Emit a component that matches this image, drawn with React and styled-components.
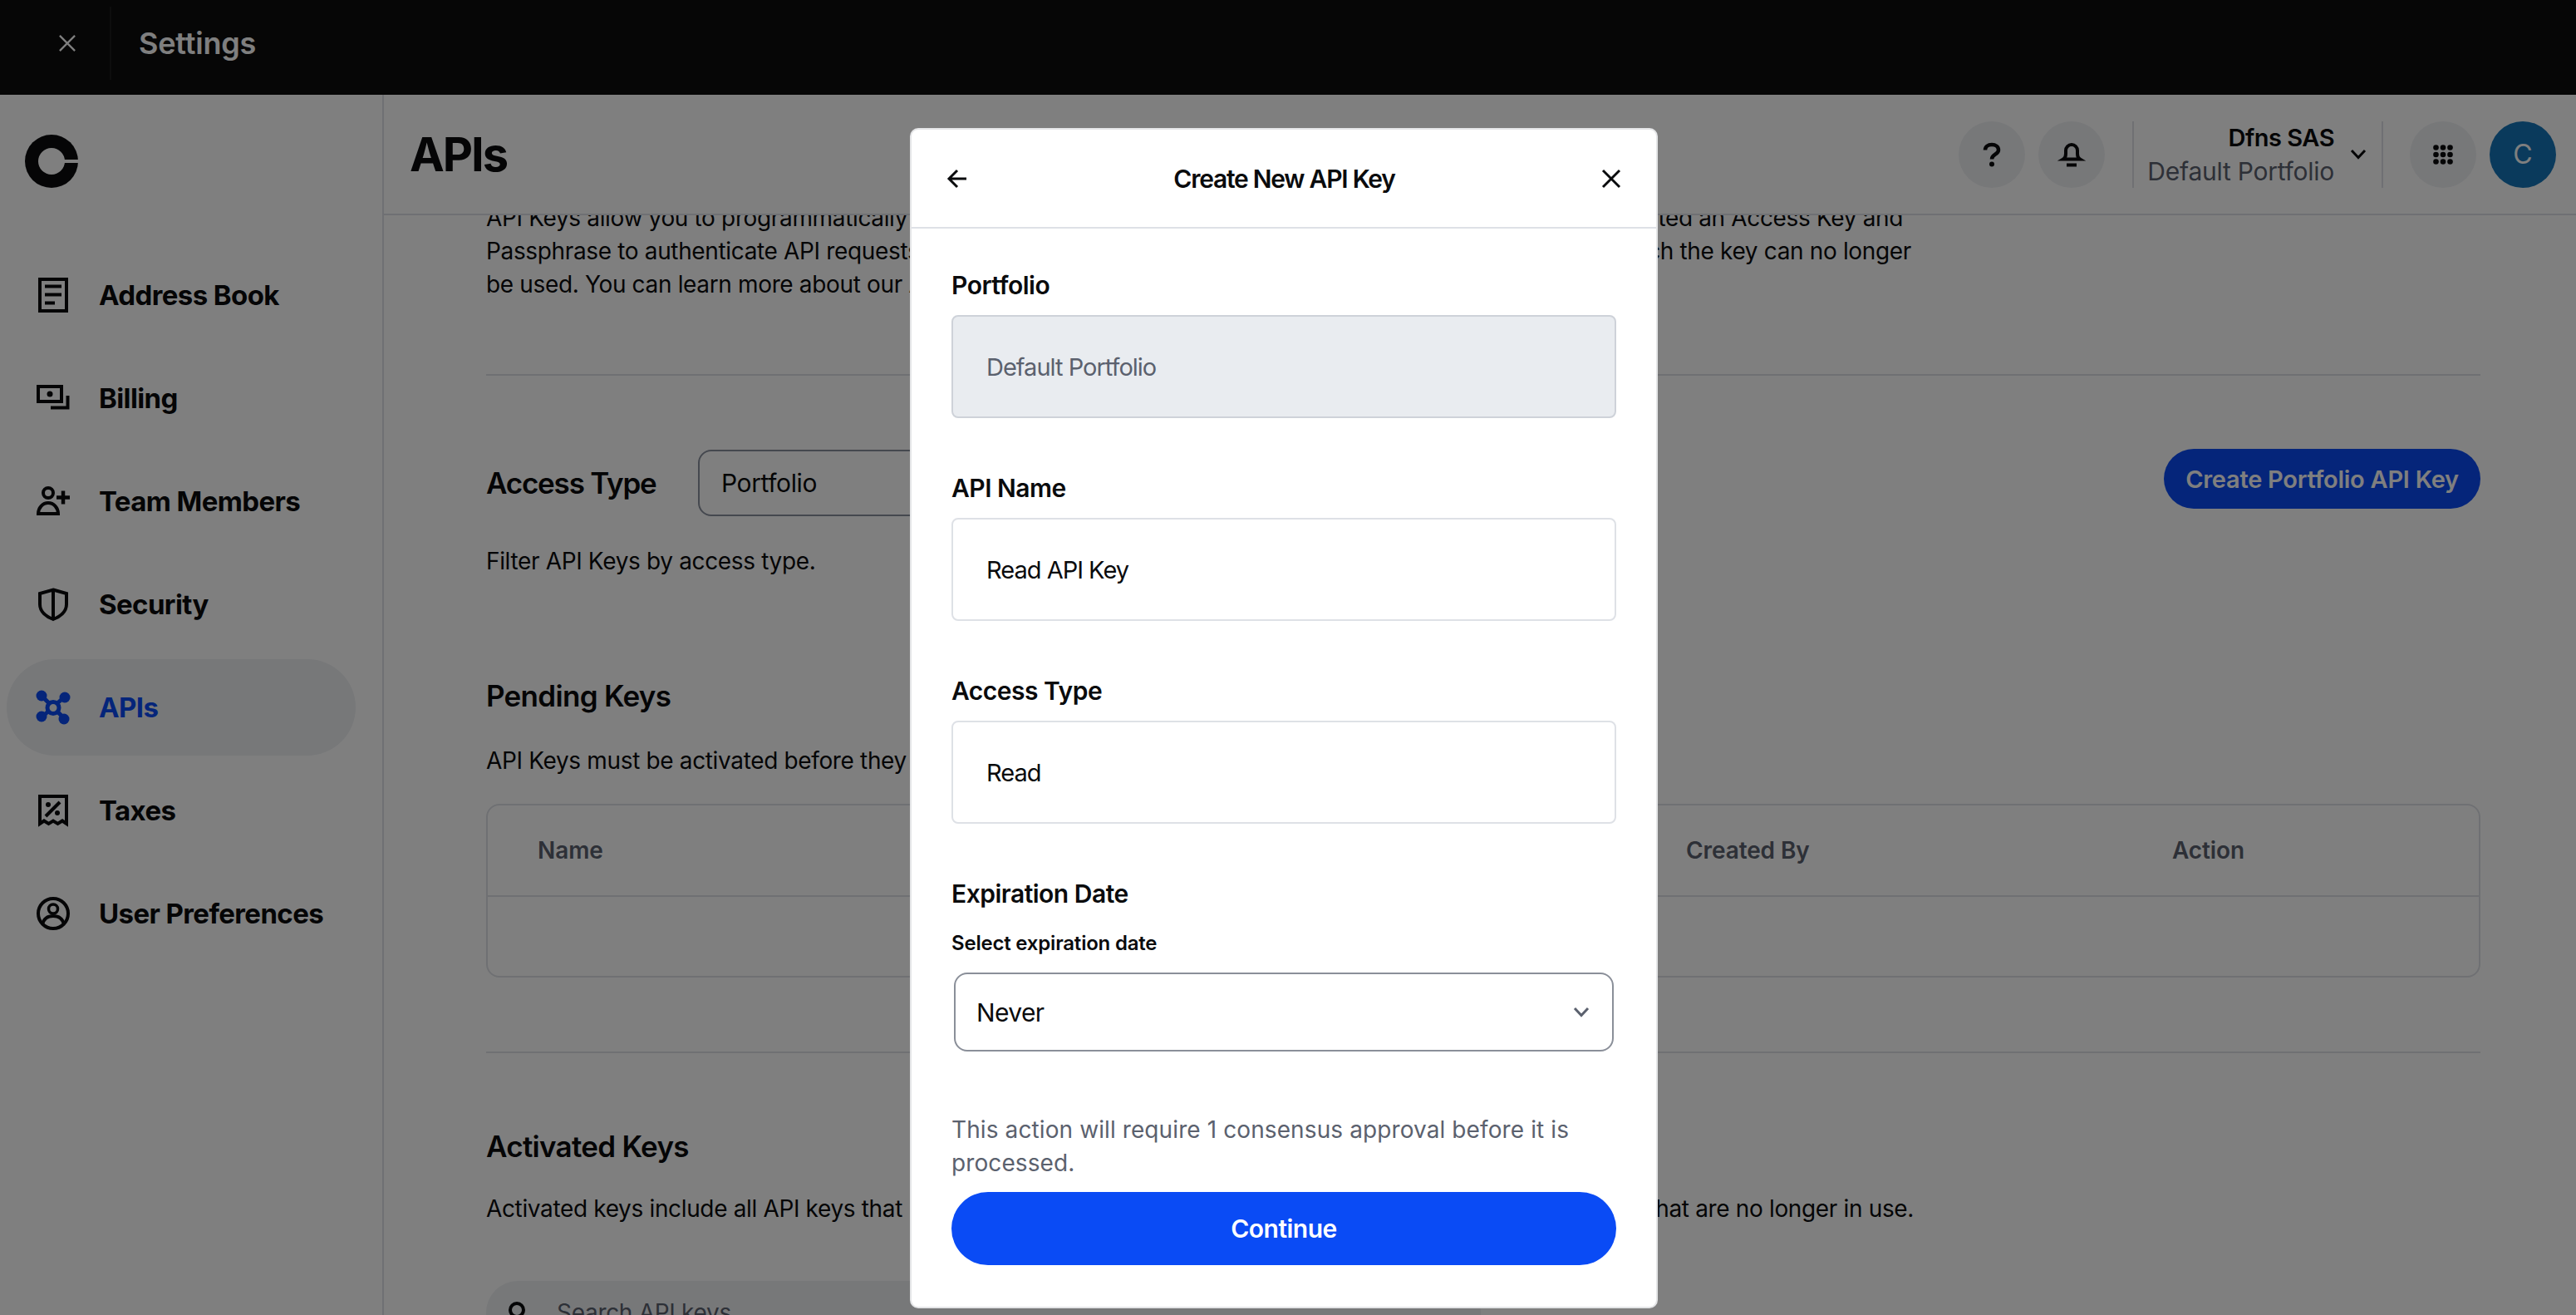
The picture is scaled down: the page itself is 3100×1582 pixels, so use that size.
import React from 'react'
import styled, { createGlobalStyle } from 'styled-components'

const Global = createGlobalStyle`
  html, body {
    margin: 0;
    padding: 0;
    background: #fff;
    color: #0a0b0d;
    font-family: Inter, "Liberation Sans", sans-serif;
  }
  * { box-sizing: border-box; }
`

const Page = styled.div`
  position: relative;
  display: flex;
  flex-direction: column;
  width: 3100px;
  height: 1582px;
  overflow: hidden;
`

const TopBar = styled.header`
  display: flex;
  align-items: center;
  flex: none;
  height: 114px;
  padding-bottom: 10px;
  background: #0d0d0d;
`

const TopClose = styled.div`
  display: flex;
  align-items: center;
  justify-content: center;
  width: 134px;
  height: 88px;
  padding-left: 30px;
  border-right: 2px solid #1b1b1b;
  color: #fff;
`

const TopTitle = styled.div`
  margin-left: 33px;
  font-size: 36px;
  font-weight: 600;
  letter-spacing: -0.2px;
  color: #fff;
`

const Body = styled.div`
  display: flex;
  flex: 1;
  min-height: 0;
`

const Sidebar = styled.aside`
  flex: none;
  width: 462px;
  padding-top: 48px;
  border-right: 2px solid #dee1e6;
`

const Logo = styled.svg`
  display: block;
  width: 64px;
  height: 64px;
  margin: 0 0 71px 30px;
`

const Nav = styled.nav`
  display: flex;
  flex-direction: column;
  gap: 8px;
  width: 420px;
  margin-left: 8px;
`

const NavRow = styled.a`
  display: flex;
  align-items: center;
  gap: 35px;
  height: 116px;
  padding-left: 36px;
  border-radius: 58px;
  font-size: 33px;
  font-weight: 650;
  letter-spacing: -0.6px;
  color: ${p => (p.$active ? '#0a4bf5' : '#0a0b0d')};
  background: ${p => (p.$active ? '#eef0f3' : 'transparent')};
`

const NavIcon = styled.svg`
  flex: none;
  width: 40px;
  height: 40px;
  overflow: visible;
`

const Main = styled.main`
  display: flex;
  flex-direction: column;
  flex: 1;
  min-width: 0;
`

const MainHeader = styled.div`
  display: flex;
  align-items: center;
  justify-content: space-between;
  flex: none;
  height: 145px;
  padding: 0 24px 0 31px;
  border-bottom: 2px solid #dee1e6;
`

const PageTitle = styled.h1`
  margin: 0;
  font-size: 56px;
  font-weight: 700;
  letter-spacing: -2px;
`

const HeaderTools = styled.div`
  display: flex;
  align-items: center;
  height: 80px;
`

const RoundButton = styled.div`
  display: flex;
  align-items: center;
  justify-content: center;
  width: 80px;
  height: 80px;
  margin-left: ${p => p.$gap || 16}px;
  border-radius: 50%;
  background: #eef0f3;
`

const Avatar = styled(RoundButton)`
  background: #1575b8;
  color: #fff;
  font-size: 32px;
`

const VRule = styled.div`
  width: 2px;
  height: 80px;
  margin-left: ${p => p.$gap || 0}px;
  background: #dee1e6;
`

const Account = styled.div`
  display: flex;
  align-items: center;
  gap: 20px;
  padding: 0 19px 0 16px;
`

const AccountText = styled.div`
  text-align: right;
  line-height: 40px;
`

const AccountName = styled.div`
  font-size: 29px;
  font-weight: 600;
  letter-spacing: -0.5px;
`

const AccountSub = styled.div`
  font-size: 30px;
  letter-spacing: -0.25px;
  color: #5b616e;
`

const Content = styled.div`
  flex: 1;
  min-height: 0;
  padding: 0 115px 0 123px;
  overflow: hidden;
`

const Intro = styled.div`
  margin-top: -17px;
`

const SplitLine = styled.div`
  display: flex;
  justify-content: space-between;
  width: ${p => p.$width || 1715}px;
  margin-top: ${p => p.$top || 0}px;
  font-size: 28px;
  line-height: 40px;
  letter-spacing: -0.35px;
  white-space: nowrap;
`

const Rule = styled.hr`
  height: 2px;
  margin: ${p => p.$top}px 0 0;
  border: 0;
  background: #dee1e6;
`

const AccessRow = styled.div`
  display: flex;
  align-items: flex-start;
  justify-content: space-between;
  margin-top: 88px;
`

const AccessLeft = styled.div`
  display: flex;
  align-items: center;
  margin-top: 1px;
`

const SectionTitle = styled.h2`
  margin: ${p => p.$top || 0}px 0 0;
  font-size: 35px;
  font-weight: 600;
  line-height: 48px;
  letter-spacing: -0.7px;
`

const AccessTitle = styled(SectionTitle)`
  width: 255px;
  letter-spacing: -1.2px;
`

const AccessSelect = styled.div`
  display: flex;
  align-items: center;
  width: 420px;
  height: 80px;
  padding-left: 26px;
  border: 2px solid #8a919e;
  border-radius: 16px;
  font-size: 30px;
  letter-spacing: -0.4px;
`

const PrimarySmall = styled.div`
  display: flex;
  align-items: center;
  justify-content: center;
  width: 381px;
  height: 72px;
  border-radius: 36px;
  background: #0a4bf5;
  color: #fff;
  font-size: 29px;
  font-weight: 600;
  letter-spacing: -0.25px;
`

const KeysTable = styled.div`
  height: 209px;
  margin-top: 32px;
  border: 2px solid #dee1e6;
  border-radius: 16px;
`

const TableHead = styled.div`
  display: grid;
  grid-template-columns: 1382px 585px 1fr;
  align-items: center;
  height: 110px;
  padding-left: 60px;
  border-bottom: 2px solid #dee1e6;
  font-size: 28px;
  font-weight: 600;
  letter-spacing: -0.1px;
  color: #5b616e;
`

const SearchBar = styled.div`
  display: flex;
  align-items: center;
  gap: 34px;
  width: 1197px;
  height: 76px;
  margin-top: 67px;
  padding-left: 27px;
  border-radius: 38px;
  background: #eef0f3;
  font-size: 28px;
  letter-spacing: -0.3px;
  color: #5b616e;
`

const SearchIcon = styled.svg`
  flex: none;
  width: 24px;
  height: 36px;
  overflow: visible;
`

const Scrim = styled.div`
  position: absolute;
  inset: 0;
  display: flex;
  align-items: flex-start;
  justify-content: center;
  padding: 154px 10px 0 0;
  background: rgba(0, 0, 0, 0.5);
`

const Modal = styled.div`
  width: 900px;
  height: 1420px;
  border: 2px solid #e4e5e7;
  border-radius: 10px;
  background: #fff;
`

const ModalHeader = styled.div`
  display: flex;
  align-items: center;
  justify-content: space-between;
  height: 119px;
  padding: 0 43px 0 42px;
  border-bottom: 2px solid #dee1e6;
`

const ModalTitle = styled.div`
  font-size: 30px;
  font-weight: 600;
  letter-spacing: -1.25px;
`

const ModalBody = styled.div`
  display: flex;
  flex-direction: column;
  padding: 48px 48px 0;
`

const Field = styled.div`
  display: flex;
  flex-direction: column;
  margin-bottom: 64px;
`

const FieldLabel = styled.div`
  margin-bottom: 16px;
  font-size: 30px;
  font-weight: 600;
  line-height: 40px;
  letter-spacing: -0.5px;
`

const ValueBox = styled.div`
  display: flex;
  align-items: center;
  height: 124px;
  padding-left: 40px;
  border: 2px solid ${p => (p.$disabled ? '#ced2d9' : '#dee1e6')};
  border-radius: 8px;
  background: ${p => (p.$disabled ? '#e9ecf0' : '#fff')};
  color: ${p => (p.$disabled ? '#5b616e' : '#0a0b0d')};
  font-size: 29px;
  letter-spacing: -1px;
`

const SubLabel = styled.div`
  margin-top: 8px;
  margin-bottom: 19px;
  font-size: 24px;
  font-weight: 600;
  line-height: 32px;
  letter-spacing: -0.2px;
`

const SelectBox = styled.div`
  display: flex;
  align-items: center;
  justify-content: space-between;
  height: 95px;
  margin: 0 3px;
  padding: 0 28px 0 25px;
  border: 2px solid #8a8f99;
  border-radius: 16px;
  font-size: 30px;
  letter-spacing: -0.6px;
`

const Notice = styled.p`
  margin: 74px 0 15px;
  font-size: 28px;
  line-height: 40px;
  letter-spacing: 0.1px;
  color: #5b616e;
`

const Continue = styled.div`
  display: flex;
  align-items: center;
  justify-content: center;
  height: 88px;
  border-radius: 44px;
  background: #0a4bf5;
  color: #fff;
  font-size: 30px;
  font-weight: 600;
  letter-spacing: -0.5px;
`

const GlyphSvg = styled.svg`
  display: block;
  flex: none;
  overflow: visible;
`

const CloseIcon = ({ size = 22, weight = 3 }) => (
  <GlyphSvg width={size} height={size} viewBox="0 0 22 22" fill="none" stroke="currentColor" strokeWidth={weight}>
    <path d="M1 1l20 20M21 1L1 21" />
  </GlyphSvg>
)

const ChevronIcon = ({ color, weight = 3 }) => (
  <GlyphSvg width="18" height="11" viewBox="0 0 18 11" fill="none" stroke={color} strokeWidth={weight}>
    <path d="M1 1l8 8.5L17 1" />
  </GlyphSvg>
)

const navItems = [
  {
    label: 'Address Book',
    icon: (
      <g fill="none" stroke="currentColor" strokeWidth="4">
        <rect x="4" y="1" width="32" height="38" />
        <path d="M10 9.5h20M10 19.5h20M10 29.5h12" />
      </g>
    ),
  },
  {
    label: 'Billing',
    icon: (
      <g fill="none" stroke="currentColor" strokeWidth="4">
        <rect x="2" y="6" width="28" height="18" />
        <circle cx="16" cy="15" r="3.5" fill="currentColor" stroke="none" />
        <path d="M17 31.5h20.5V17" />
      </g>
    ),
  },
  {
    label: 'Team Members',
    icon: (
      <g fill="none" stroke="currentColor" strokeWidth="4">
        <circle cx="14" cy="10" r="6" />
        <path d="M2 35a12 13 0 0 1 24 0z" />
        <path d="M24 15.5h16M32 7.5v16" strokeWidth="4.5" />
      </g>
    ),
  },
  {
    label: 'Security',
    icon: (
      <g fill="none" stroke="currentColor" strokeWidth="4">
        <path d="M20 2.5L36 7v13c0 9-8 15-16 18C12 35 4 29 4 20V7z" />
        <path d="M20 2v36" />
      </g>
    ),
  },
  {
    label: 'APIs',
    active: true,
    icon: (
      <g fill="currentColor">
        <path d="M6 6l28 28M34 7L6 32" fill="none" stroke="currentColor" strokeWidth="5" />
        <circle cx="6" cy="6" r="6.5" />
        <circle cx="34" cy="8" r="6.5" />
        <circle cx="6" cy="31" r="6.5" />
        <circle cx="33" cy="34" r="6.5" />
        <circle cx="20" cy="20.5" r="7" fill="#eef0f3" stroke="currentColor" strokeWidth="5" />
      </g>
    ),
  },
  {
    label: 'Taxes',
    icon: (
      <g fill="none" stroke="currentColor" strokeWidth="4">
        <path d="M4 3h32v33l-5-3.5-5.5 3.5-5.5-3.5-5.5 3.5-5.5-3.5L4 36z" />
        <path d="M28 10L11 27" />
        <circle cx="14" cy="13" r="3" fill="currentColor" stroke="none" />
        <circle cx="25" cy="23" r="3" fill="currentColor" stroke="none" />
      </g>
    ),
  },
  {
    label: 'User Preferences',
    icon: (
      <g fill="none" stroke="currentColor" strokeWidth="4">
        <circle cx="20" cy="20" r="18" />
        <circle cx="20" cy="14.5" r="5.5" strokeWidth="3.5" />
        <path d="M7 33c2-8 8-10 13-10s11 2 13 10" />
      </g>
    ),
  },
]

const App = () => (
  <Page>
    <Global />
    <TopBar>
      <TopClose>
        <CloseIcon size={20} weight={2.5} />
      </TopClose>
      <TopTitle>Settings</TopTitle>
    </TopBar>
    <Body>
      <Sidebar>
        <Logo viewBox="0 0 64 64">
          <circle cx="32" cy="32" r="32" fill="#0a0b0d" />
          <circle cx="32" cy="32" r="16" fill="#fff" />
          <rect x="44" y="30" width="20" height="4" fill="#fff" />
        </Logo>
        <Nav>
          {navItems.map(item => (
            <NavRow key={item.label} $active={item.active}>
              <NavIcon viewBox="0 0 40 40">{item.icon}</NavIcon>
              {item.label}
            </NavRow>
          ))}
        </Nav>
      </Sidebar>
      <Main>
        <MainHeader>
          <PageTitle>APIs</PageTitle>
          <HeaderTools>
            <RoundButton>
              <GlyphSvg width="20" height="28" viewBox="0 0 20 28" fill="none" stroke="#0a0b0d" strokeWidth="4.5">
                <path d="M2 8.5C2 4.5 5.5 2 10 2s8 2.5 8 6.5c0 5.500-8 5-8 11" />
                <circle cx="10" cy="25.5" r="3" fill="#0a0b0d" stroke="none" />
              </GlyphSvg>
            </RoundButton>
            <RoundButton>
              <GlyphSvg width="24" height="28" viewBox="0 0 24 28" fill="none" stroke="#0a0b0d" strokeWidth="4">
                <path d="M2 19.5c2.5-1.5 3-3 3-6.5V9a7 7 0 0 1 14 0v4c0 3.5.5 5 3 6.5z" />
                <path d="M6 26.5h12" />
              </GlyphSvg>
            </RoundButton>
            <VRule $gap={33} />
            <Account>
              <AccountText>
                <AccountName>Dfns SAS</AccountName>
                <AccountSub>Default Portfolio</AccountSub>
              </AccountText>
              <ChevronIcon color="#0a0b0d" />
            </Account>
            <VRule />
            <RoundButton $gap={32}>
              <GlyphSvg width="24" height="24" viewBox="0 0 24 24" fill="#0a0b0d">
                {[3.5, 12, 20.5].flatMap(y =>
                  [3.5, 12, 20.5].map(x => <circle key={`${x}-${y}`} cx={x} cy={y} r="3.3" />)
                )}
              </GlyphSvg>
            </RoundButton>
            <Avatar>C</Avatar>
          </HeaderTools>
        </MainHeader>
        <Content>
          <Intro>
            <SplitLine $width={1705}>
              <span>API Keys allow you to programmatically</span>
              <span>generated an Access Key and</span>
            </SplitLine>
            <SplitLine>
              <span>Passphrase to authenticate API requests</span>
              <span>after which the key can no longer</span>
            </SplitLine>
            <SplitLine>
              <span>be used. You can learn more about our APIs</span>
            </SplitLine>
          </Intro>
          <Rule $top={88} />
          <AccessRow>
            <AccessLeft>
              <AccessTitle>Access Type</AccessTitle>
              <AccessSelect>Portfolio</AccessSelect>
            </AccessLeft>
            <PrimarySmall>Create Portfolio API Key</PrimarySmall>
          </AccessRow>
          <SplitLine $top={34}>
            <span>Filter API Keys by access type.</span>
          </SplitLine>
          <SectionTitle $top={118}>Pending Keys</SectionTitle>
          <SplitLine $top={34}>
            <span>API Keys must be activated before they can be used.</span>
          </SplitLine>
          <KeysTable>
            <TableHead>
              <span>Name</span>
              <span>Created By</span>
              <span>Action</span>
            </TableHead>
          </KeysTable>
          <Rule $top={89} />
          <SectionTitle $top={88}>Activated Keys</SectionTitle>
          <SplitLine $top={31} $width={1718}>
            <span>Activated keys include all API keys that</span>
            <span>that are no longer in use.</span>
          </SplitLine>
          <SearchBar>
            <SearchIcon viewBox="0 0 24 36" fill="none" stroke="#0a0b0d" strokeWidth="4">
              <circle cx="10" cy="15" r="8" />
            </SearchIcon>
            Search API keys
          </SearchBar>
        </Content>
      </Main>
    </Body>
    <Scrim>
      <Modal>
        <ModalHeader>
          <GlyphSvg width="24" height="24" viewBox="0 0 24 24" fill="none" stroke="#0a0b0d" strokeWidth="3">
            <path d="M24 12H3M13 2L3 12l10 10" />
          </GlyphSvg>
          <ModalTitle>Create New API Key</ModalTitle>
          <CloseIcon />
        </ModalHeader>
        <ModalBody>
          <Field>
            <FieldLabel>Portfolio</FieldLabel>
            <ValueBox $disabled>Default Portfolio</ValueBox>
          </Field>
          <Field>
            <FieldLabel>API Name</FieldLabel>
            <ValueBox>Read API Key</ValueBox>
          </Field>
          <Field>
            <FieldLabel>Access Type</FieldLabel>
            <ValueBox>Read</ValueBox>
          </Field>
          <FieldLabel>Expiration Date</FieldLabel>
          <SubLabel>Select expiration date</SubLabel>
          <SelectBox>
            Never
            <ChevronIcon color="#5b616e" />
          </SelectBox>
          <Notice>This action will require 1 consensus approval before it is processed.</Notice>
          <Continue>Continue</Continue>
        </ModalBody>
      </Modal>
    </Scrim>
  </Page>
)

export default App
